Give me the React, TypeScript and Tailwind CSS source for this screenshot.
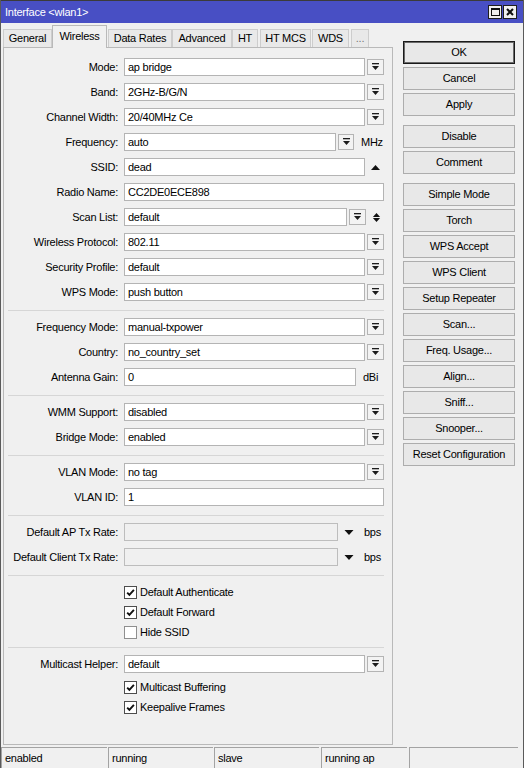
import React from "react";

type Child = React.ReactNode;

function DropIcon() {
  return (
    <svg width="9" height="8" viewBox="0 0 9 8">
      <rect x="1" y="0" width="7" height="1.3" fill="#1c1c1c" />
      <path d="M1 3 H8 L4.5 7 Z" fill="#1c1c1c" />
    </svg>
  );
}

function DropButton({ w = "w-[17px]" }: { w?: string }) {
  return (
    <div className={`ml-[2px] flex h-[16px] ${w} items-center justify-center border border-[#b4b4b4] bg-[#f3f3f3]`}>
      <DropIcon />
    </div>
  );
}

function Box({ w, value, disabled }: { w: string; value?: string; disabled?: boolean }) {
  return (
    <div
      className={`flex h-[18px] ${w} items-center border pl-[3px] ${
        disabled ? "border-[#bdbdbd] bg-[#f0f0f0]" : "border-[#b4b4b4] bg-white"
      }`}
    >
      <span className="leading-none">{value}</span>
    </div>
  );
}

function Row({ label, children }: { label: string; children: Child }) {
  return (
    <div className="flex h-[18px] items-center">
      <div className="w-[115px] whitespace-nowrap pr-[1px] text-right">{label}</div>
      <div className="ml-[5px] flex h-full items-center">{children}</div>
    </div>
  );
}

function Select({ label, value }: { label: string; value: string }) {
  return (
    <Row label={label}>
      <Box w="w-[241px]" value={value} />
      <DropButton />
    </Row>
  );
}

function Separator({ top = "mt-[9px]" }: { top?: string }) {
  return <div className={`${top} mb-[7px] ml-[4px] h-px w-[376px] bg-[#d6d6d6]`} />;
}

function Check({ label, checked }: { label: string; checked?: boolean }) {
  return (
    <div className="flex h-[18px] items-center pl-[120px]">
      <div
        className={`flex h-[13px] w-[13px] items-center justify-center border bg-white ${
          checked ? "border-[#4d4d4d]" : "border-[#8f8f8f]"
        }`}
      >
        {checked && (
          <svg width="9" height="9" viewBox="0 0 9 9">
            <path d="M1.2 4.6 L3.4 6.9 L7.9 1.8" fill="none" stroke="#111" strokeWidth="1.9" />
          </svg>
        )}
      </div>
      <span className="ml-[3px]">{label}</span>
    </div>
  );
}

function Triangle({ up, size = "w-[9px] h-[5px]" }: { up?: boolean; size?: string }) {
  return (
    <svg className={size} viewBox="0 0 9 5">
      <path d={up ? "M0 5 H9 L4.5 0 Z" : "M0 0 H9 L4.5 5 Z"} fill="#111" />
    </svg>
  );
}

function TitleBar() {
  return (
    <div className="flex h-[23px] shrink-0 items-center justify-between border-t border-[#3b3b3b] bg-[#484fc4] pl-[4px] pr-[6px] text-white">
      <span>Interface &lt;wlan1&gt;</span>
      <div className="flex gap-[1px]">
        <div className="flex h-[14px] w-[14px] items-center justify-center border border-[#1e1e1e] bg-[#f0f0f0]">
          <div className="h-[8px] w-[9px] border border-t-2 border-[#111]" />
        </div>
        <div className="flex h-[14px] w-[14px] items-center justify-center border border-[#1e1e1e] bg-[#f0f0f0]">
          <svg width="8" height="8" viewBox="0 0 8 8">
            <path d="M1 1 L7 7 M7 1 L1 7" stroke="#111" strokeWidth="2" />
          </svg>
        </div>
      </div>
    </div>
  );
}

const tabs = [
  { name: "General", w: "w-[49px]", ml: "ml-0" },
  { name: "Wireless", w: "w-[55px]", ml: "ml-0", active: true },
  { name: "Data Rates", w: "w-[64px]", ml: "ml-[1px]" },
  { name: "Advanced", w: "w-[60px]", ml: "ml-0" },
  { name: "HT", w: "w-[26px]", ml: "ml-0" },
  { name: "HT MCS", w: "w-[51px]", ml: "ml-[2px]" },
  { name: "WDS", w: "w-[37px]", ml: "ml-[1px]" },
  { name: "...", w: "w-[18px]", ml: "ml-[2px]", muted: true },
];

function Tabs() {
  return (
    <div className="flex h-[24px] shrink-0 items-end">
      {tabs.map((t) => (
        <div
          key={t.name}
          className={`${t.w} ${t.ml} flex items-center justify-center whitespace-nowrap border border-b-0 ${
            t.active
              ? "relative z-10 -mb-px h-[23px] border-[#b9b9b9] bg-[#f0f0f0] pb-[2px]"
              : "h-[18px] border-[#cdcdcd] bg-[#e9e9e9]"
          } ${t.muted ? "text-[#777]" : ""}`}
        >
          {t.name}
        </div>
      ))}
    </div>
  );
}

function Panel() {
  return (
    <div className="flex flex-1 flex-col border border-[#b9b9b9] pt-[10px]">
      <div className="flex flex-col gap-[7px]">
        <Select label="Mode:" value="ap bridge" />
        <Select label="Band:" value="2GHz-B/G/N" />
        <Select label="Channel Width:" value="20/40MHz Ce" />
        <Row label="Frequency:">
          <Box w="w-[212px]" value="auto" />
          <DropButton w="w-[16px]" />
          <span className="ml-[7px]">MHz</span>
        </Row>
        <Row label="SSID:">
          <Box w="w-[241px]" value="dead" />
          <div className="ml-[6px] flex items-center">
            <Triangle up />
          </div>
        </Row>
        <Row label="Radio Name:">
          <Box w="w-[260px]" value="CC2DE0ECE898" />
        </Row>
        <Row label="Scan List:">
          <Box w="w-[223px]" value="default" />
          <DropButton />
          <div className="ml-[6px] flex flex-col gap-[1px]">
            <Triangle up size="w-[9px] h-[4px]" />
            <Triangle size="w-[9px] h-[4px]" />
          </div>
        </Row>
        <Select label="Wireless Protocol:" value="802.11" />
        <Select label="Security Profile:" value="default" />
        <Select label="WPS Mode:" value="push button" />
      </div>

      <Separator />

      <div className="flex flex-col gap-[7px]">
        <Select label="Frequency Mode:" value="manual-txpower" />
        <Select label="Country:" value="no_country_set" />
        <Row label="Antenna Gain:">
          <Box w="w-[232px]" value="0" />
          <span className="ml-[7px]">dBi</span>
        </Row>
      </div>

      <Separator />

      <div className="flex flex-col gap-[7px]">
        <Select label="WMM Support:" value="disabled" />
        <Select label="Bridge Mode:" value="enabled" />
      </div>

      <Separator />

      <div className="flex flex-col gap-[7px]">
        <Select label="VLAN Mode:" value="no tag" />
        <Row label="VLAN ID:">
          <Box w="w-[260px]" value="1" />
        </Row>
      </div>

      <Separator />

      <div className="flex flex-col gap-[7px]">
        <Row label="Default AP Tx Rate:">
          <Box w="w-[214px]" disabled />
          <div className="ml-[6px] flex items-center">
            <Triangle size="w-[10px] h-[5px]" />
          </div>
          <span className="ml-[10px]">bps</span>
        </Row>
        <Row label="Default Client Tx Rate:">
          <Box w="w-[214px]" disabled />
          <div className="ml-[6px] flex items-center">
            <Triangle size="w-[10px] h-[5px]" />
          </div>
          <span className="ml-[10px]">bps</span>
        </Row>
      </div>

      <Separator />

      <div className="flex flex-col gap-[2px]">
        <Check label="Default Authenticate" checked />
        <Check label="Default Forward" checked />
        <Check label="Hide SSID" />
      </div>

      <Separator top="mt-[6px]" />

      <div className="flex flex-col">
        <Select label="Multicast Helper:" value="default" />
        <div className="mt-[5px] flex flex-col gap-[2px]">
          <Check label="Multicast Buffering" checked />
          <Check label="Keepalive Frames" checked />
        </div>
      </div>
    </div>
  );
}

function ActionButton({ label, primary, gap }: { label: string; primary?: boolean; gap?: boolean }) {
  return (
    <div
      className={`flex h-[23px] w-[112px] items-center justify-center border ${
        primary ? "border-[#1a1a1a] shadow-[inset_0_0_0_1px_#6a6a6a]" : "border-[#adadad]"
      } bg-[#e8e8e8] ${gap ? "mt-[6px]" : ""}`}
    >
      {label}
    </div>
  );
}

function ActionColumn() {
  const groups: string[][] = [
    ["OK", "Cancel", "Apply"],
    ["Disable", "Comment"],
    [
      "Simple Mode",
      "Torch",
      "WPS Accept",
      "WPS Client",
      "Setup Repeater",
      "Scan...",
      "Freq. Usage...",
      "Align...",
      "Sniff...",
      "Snooper...",
      "Reset Configuration",
    ],
  ];
  return (
    <div className="ml-[10px] mt-[18px] flex flex-col gap-[3px]">
      {groups.map((g, gi) =>
        g.map((label, i) => (
          <ActionButton key={label} label={label} primary={label === "OK"} gap={gi > 0 && i === 0} />
        ))
      )}
    </div>
  );
}

const statusCells = [
  { text: "enabled", w: "w-[106px]", ml: "ml-0" },
  { text: "running", w: "w-[105px]", ml: "ml-[1px]" },
  { text: "slave", w: "w-[105px]", ml: "ml-[1px]" },
  { text: "running ap", w: "w-[86px]", ml: "ml-[2px]" },
  { text: "", w: "w-[109px]", ml: "ml-[2px]" },
];

function StatusBar() {
  return (
    <div className="flex h-[21px] shrink-0">
      {statusCells.map((c, i) => (
        <div
          key={i}
          className={`${c.w} ${c.ml} flex h-full items-center border-l border-t border-[#a3a3a3] pl-[3px]`}
        >
          {c.text}
        </div>
      ))}
    </div>
  );
}

export default function App() {
  return (
    <div className="flex h-[768px] w-[524px] flex-col overflow-hidden border-x border-[#5a5a5a] bg-[#f0f0f0] font-['Liberation_Sans',Arial,sans-serif] text-[11px] tracking-[-0.25px] text-black">
      <TitleBar />
      <div className="flex min-h-0 flex-1">
        <div className="ml-[2px] flex w-[390px] flex-col pb-[2px]">
          <Tabs />
          <Panel />
        </div>
        <ActionColumn />
      </div>
      <StatusBar />
    </div>
  );
}
